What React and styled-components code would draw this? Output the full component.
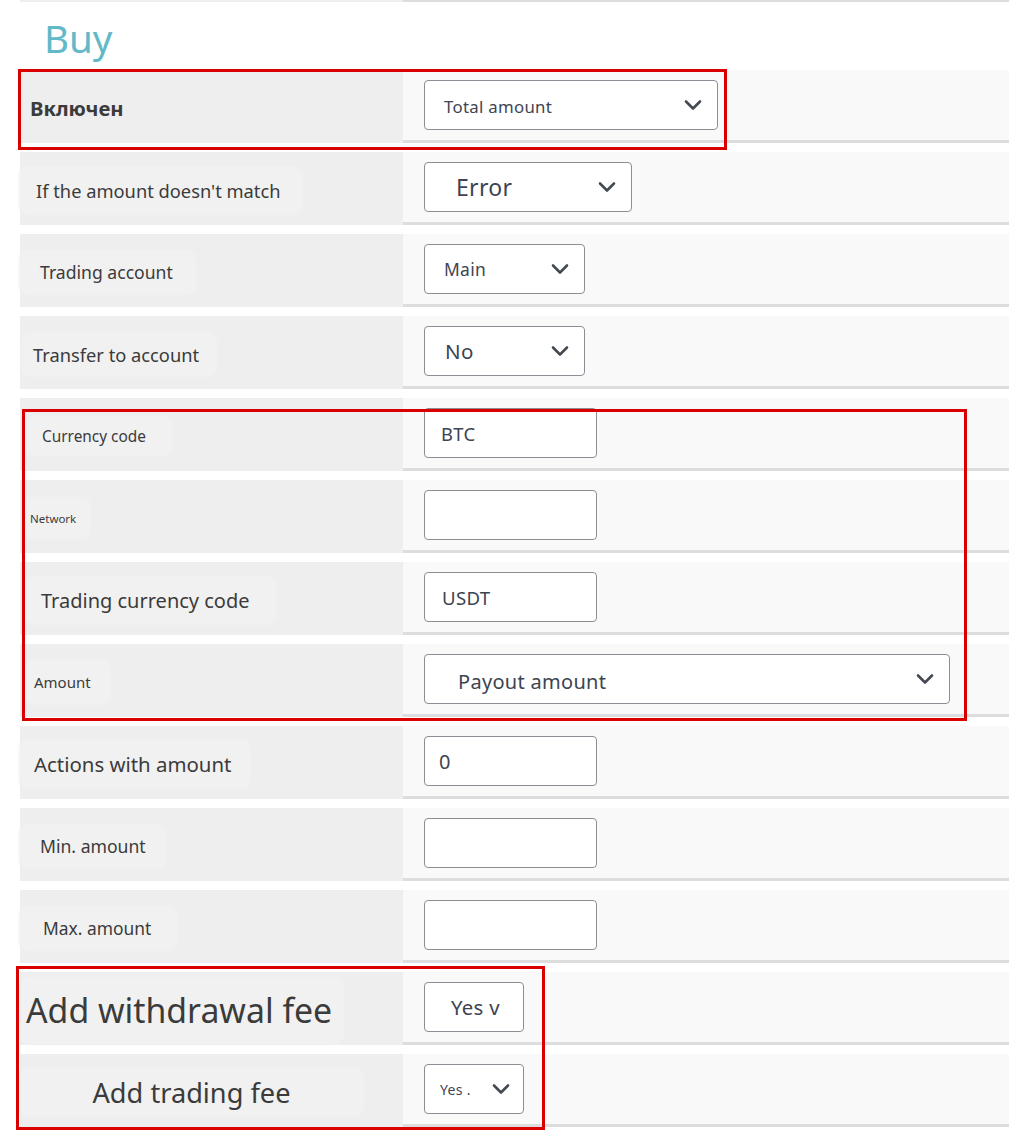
import React from "react"
import styled, { createGlobalStyle } from "styled-components"

const GlobalStyle = createGlobalStyle`
  body {
    margin: 0;
    background: #ffffff;
    font-family: "Noto Sans", "Open Sans", sans-serif;
  }
`

const Page = styled.div`
  position: relative;
  width: 1009px;
  height: 1135px;
  overflow: hidden;
  padding-left: 20px;
  box-sizing: border-box;
`

const PrevEdge = styled.div`
  display: grid;
  grid-template-columns: 383px 1fr;
  height: 2px;
  & > div:first-child { background: #eeeeee; }
  & > div:last-child { background: #dddddd; }
`

const Title = styled.h1`
  margin: 0;
  height: 68px;
  box-sizing: border-box;
  padding: 17px 0 0 24px;
  font-family: "Noto Sans", sans-serif;
  font-weight: 400;
  font-size: 38.5px;
  line-height: 1;
  color: #62b9c7;
`

const Row = styled.div`
  display: grid;
  grid-template-columns: 383px 1fr;
  height: 73px;
  margin-bottom: 9px;
`

const LabelCell = styled.div`
  background: #eeeeee;
  display: flex;
  align-items: center;
  padding-top: 3px;
  box-sizing: border-box;
`

const Chip = styled.span`
  display: flex;
  align-items: center;
  justify-content: ${p => (p.$center ? "center" : "flex-start")};
  box-sizing: border-box;
  margin-left: ${p => p.$ml}px;
  width: ${p => p.$w}px;
  height: ${p => p.$h}px;
  padding-left: ${p => p.$pl}px;
  background: ${p => (p.$plain ? "transparent" : "#f1f1f1")};
  box-shadow: ${p => (p.$plain ? "none" : "0 0 3px 1px #f1f1f1")};
  border-radius: 8px;
  font-size: ${p => p.$size}px;
  font-weight: ${p => (p.$bold ? 700 : 400)};
  color: #3b3b3b;
  white-space: nowrap;
`

const ControlCell = styled.div`
  background: #f9f9f9;
  border-bottom: 3px solid #dddddd;
  display: flex;
  align-items: center;
  padding-left: 21px;
`

const Box = styled.div`
  position: relative;
  box-sizing: border-box;
  width: ${p => p.$w}px;
  height: 50px;
  background: #ffffff;
  border: 1.5px solid #8b8f95;
  border-radius: 4px;
  display: flex;
  align-items: center;
  padding-left: ${p => p.$pl}px;
  padding-top: ${p => p.$dy || 0}px;
  font-family: "Noto Sans", sans-serif;
  font-size: ${p => p.$size}px;
  letter-spacing: 0.3px;
  color: #3d4452;
  white-space: nowrap;
`

const Chevron = styled.svg`
  position: absolute;
  right: ${p => p.$r}px;
  top: 50%;
  transform: translateY(-50%);
`

const Highlight = styled.div`
  position: absolute;
  box-sizing: border-box;
  border: 3px solid #d90000;
  pointer-events: none;
`

const Arrow = ({ r = 16 }) => (
  <Chevron $r={r} width="18" height="11" viewBox="0 0 18 11">
    <polyline points="2,2 9,9 16,2" fill="none" stroke="#454a52" strokeWidth="2.6" strokeLinecap="round" strokeLinejoin="round" />
  </Chevron>
)

const rows = [
  { label: "Включен", bold: true, plain: true, ml: 0, w: 300, h: 40, pl: 10, size: 20.3,
    ctl: { w: 294, pl: 19, size: 16.8, value: "Total amount", arrow: true, dy: 2 } },
  { label: "If the amount doesn't match", ml: 0, w: 282, h: 47, pl: 16, size: 18.3,
    ctl: { w: 208, pl: 31, size: 23, value: "Error", arrow: true } },
  { label: "Trading account", ml: 0, w: 175, h: 43, pl: 20, size: 17.6,
    ctl: { w: 161, pl: 19, size: 17.4, value: "Main", arrow: true } },
  { label: "Transfer to account", ml: 2, w: 194, h: 43, pl: 11, size: 18.3,
    ctl: { w: 161, pl: 20, size: 20.5, value: "No", arrow: true } },
  { label: "Currency code", ml: 5, w: 146, h: 38, pl: 17, size: 15.4,
    ctl: { w: 173, pl: 16, size: 18.4, value: "BTC" } },
  { label: "Network", ml: 5, w: 65, h: 40, pl: 5, size: 11.5,
    ctl: { w: 173, pl: 16, size: 18, value: "" } },
  { label: "Trading currency code", ml: 5, w: 250, h: 47, pl: 16, size: 20,
    ctl: { w: 173, pl: 17, size: 18.6, value: "USDT", dy: 0 } },
  { label: "Amount", ml: 5, w: 85, h: 43, pl: 9, size: 15,
    ctl: { w: 526, pl: 33, size: 20, value: "Payout amount", arrow: true, dy: 4 } },
  { label: "Actions with amount", ml: 0, w: 230, h: 48, pl: 14, size: 20.4,
    ctl: { w: 173, pl: 14, size: 20, value: "0" } },
  { label: "Min. amount", ml: 0, w: 145, h: 43, pl: 20, size: 17.6,
    ctl: { w: 173, pl: 16, size: 18, value: "" } },
  { label: "Max. amount", ml: 0, w: 157, h: 43, pl: 23, size: 17.4,
    ctl: { w: 173, pl: 16, size: 18, value: "" } },
  { label: "Add withdrawal fee", ml: 0, w: 323, h: 65, pl: 6, size: 33.8,
    ctl: { w: 100, pl: 26, size: 20.4, value: "Yes v" } },
  { label: "Add trading fee", center: true, ml: 0, w: 343, h: 48, pl: 0, size: 27.2,
    ctl: { w: 100, pl: 15, size: 14, value: "Yes .", arrow: true, r: 13 } },
]

const App = () => {
  return (
    <>
      <GlobalStyle />
      <Page>
        <PrevEdge><div /><div /></PrevEdge>
        <Title>Buy</Title>
        {rows.map((row, i) => (
          <Row key={i}>
            <LabelCell>
              <Chip $ml={row.ml} $w={row.w} $h={row.h} $pl={row.pl} $size={row.size}
                $bold={row.bold} $plain={row.plain} $center={row.center}>
                {row.label}
              </Chip>
            </LabelCell>
            <ControlCell>
              <Box $w={row.ctl.w} $pl={row.ctl.pl} $size={row.ctl.size} $dy={row.ctl.dy}>
                {row.ctl.value}
                {row.ctl.arrow && <Arrow r={row.ctl.r || 15} />}
              </Box>
            </ControlCell>
          </Row>
        ))}
        <Highlight style={{ left: 18, top: 69, width: 709, height: 81 }} />
        <Highlight style={{ left: 22, top: 409, width: 945, height: 312 }} />
        <Highlight style={{ left: 16, top: 966, width: 529, height: 164 }} />
      </Page>
    </>
  )
}

export default App
